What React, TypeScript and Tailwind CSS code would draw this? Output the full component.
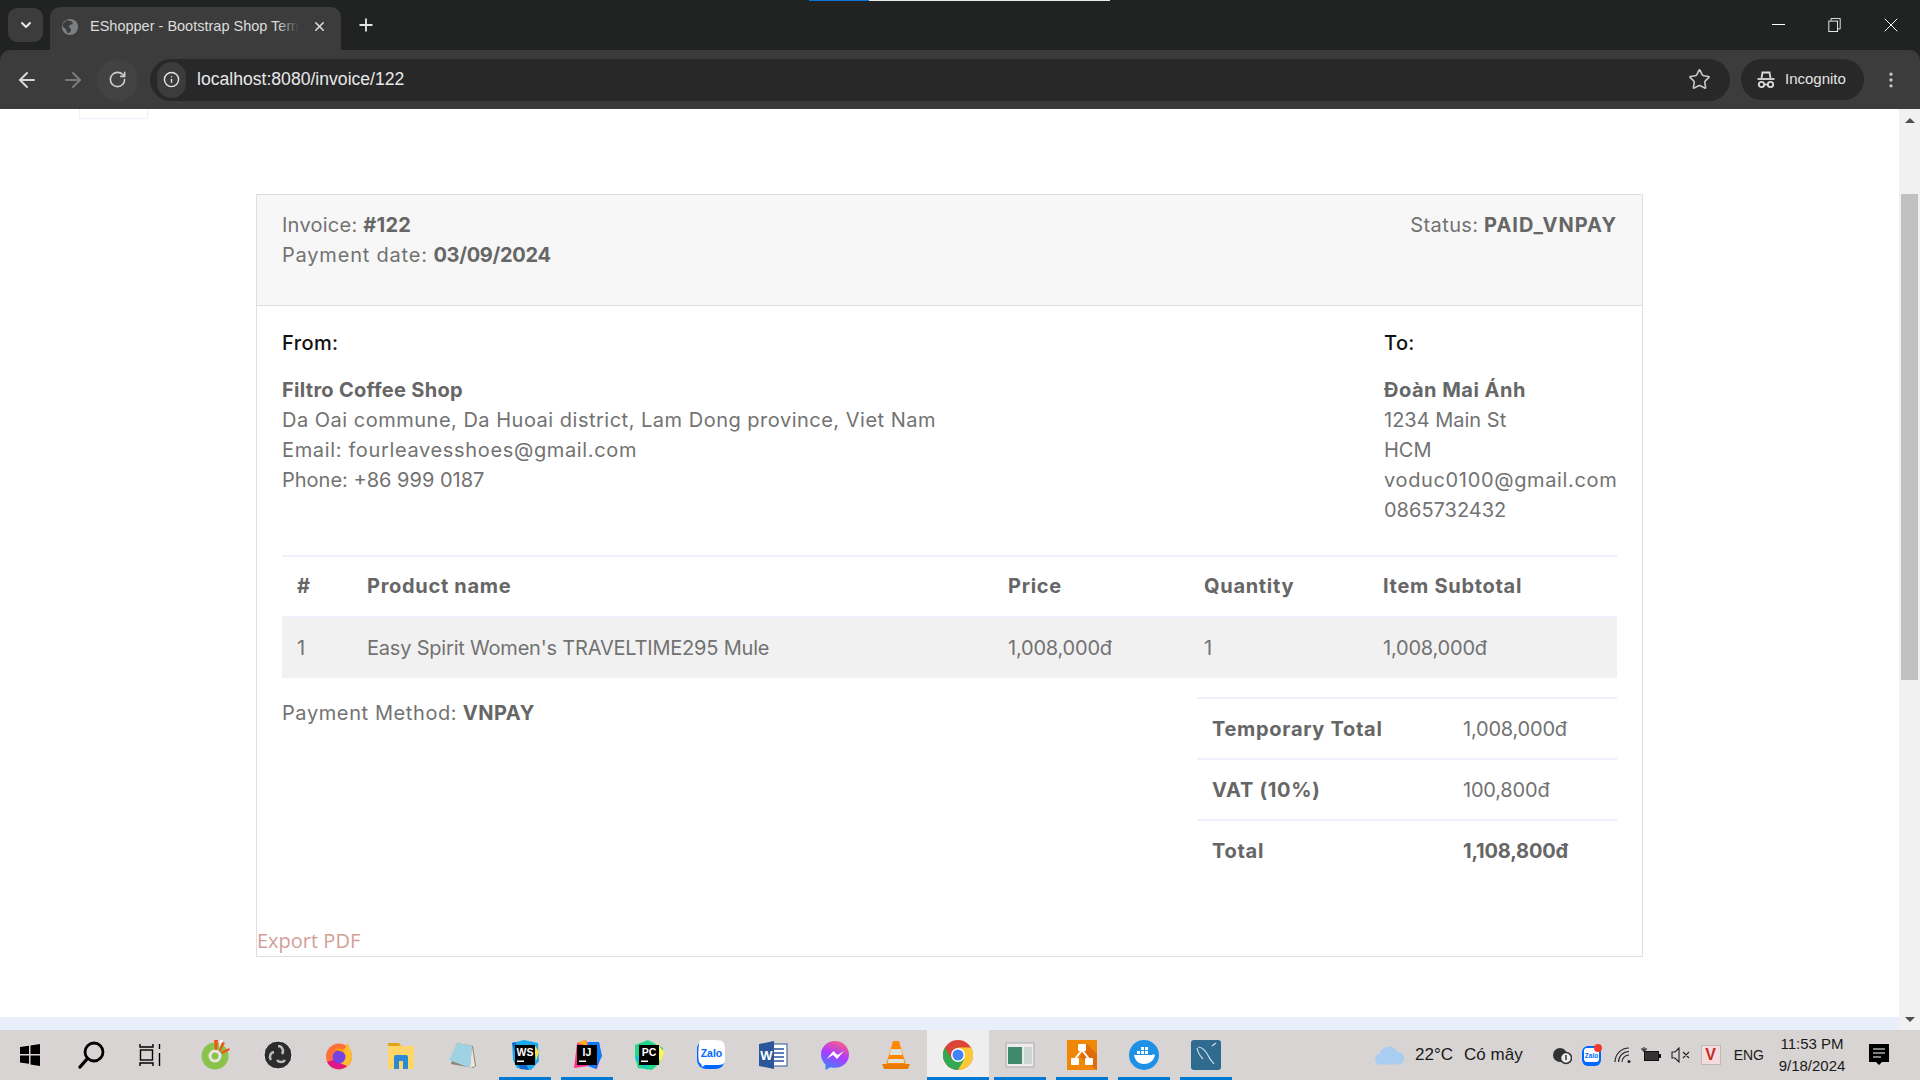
import { ArrowLeft, ArrowRight, ChevronDown, Info, MoreVertical, Plus, RotateCw, Star, X } from 'lucide-react';

const font = 'font-["Inter","Noto_Sans",sans-serif]';
const strong = 'font-bold text-[#666666]';

function Tab() {
  return (
    <div className="relative ml-[7px] mt-[7px] flex h-[43px] w-[291px] items-center rounded-t-[10px] bg-[#3c3c3c] pb-[4px] pl-[11px] pr-[14px]">
      <svg viewBox="0 0 20 20" className="h-[18px] w-[18px] shrink-0">
        <circle cx="10" cy="10" r="9" fill="#7b7e82" />
        <path d="M7 2c2 2 5 1 6 3s-3 2-4 4 3 2 2 5-3 3-4 2-1-4-3-5-3-2-2-4 3-3 5-5z" fill="#3c3c3c" />
      </svg>
      <span className="relative ml-[11px] whitespace-nowrap font-['Liberation_Sans',sans-serif] text-[14.5px] text-[#dcdcdc]">
        EShopper - Bootstrap Shop Tem
        <span className="absolute bottom-0 right-0 top-0 w-[22px] bg-gradient-to-r from-transparent to-[#3c3c3c]" />
      </span>
      <X size={15} strokeWidth={2.5} className="ml-auto shrink-0 text-[#dcdcdc]" />
    </div>
  );
}

function BrowserChrome() {
  return (
    <div className="shrink-0 bg-[#202322]">
      <div className="relative flex h-[50px]">
        <div className="absolute left-[809px] top-0 h-px w-[60px] bg-[#0b74d8]" />
        <div className="absolute left-[869px] top-0 h-px w-[241px] bg-[#e8e8e8]" />
        <div className="mb-[8px] ml-[8px] mt-[8px] flex h-[34px] w-[35px] items-center justify-center rounded-[9px] bg-[#3c3c3c]">
          <ChevronDown size={16} strokeWidth={3} className="text-[#e8e8e8]" />
        </div>
        <Tab />
        <Plus size={20} strokeWidth={2.2} className="ml-[15px] mt-[15px] text-[#e4e4e4]" />
        <div className="ml-auto flex items-start text-white">
          <div className="mt-[24px] h-px w-[13px] bg-white" />
          <svg viewBox="0 0 14 16" fill="none" stroke="currentColor" className="ml-[43px] mt-[18px] h-[14px] w-[13px]">
            <rect x="0.5" y="3.5" width="10" height="12" />
            <path d="M3 3V0.5h10.5v12H11" />
          </svg>
          <X size={24} strokeWidth={1} className="ml-[38px] mr-[17px] mt-[13px]" />
        </div>
      </div>
      <div className="flex h-[59px] items-center rounded-t-[10px] bg-[#3c3c3c]">
        <ArrowLeft size={24} className="ml-[15px] text-[#d6d6d6]" />
        <ArrowRight size={24} className="ml-[22px] text-[#7a7a7a]" />
        <div className="ml-[12px] flex h-[42px] w-[41px] items-center justify-center rounded-full bg-[#424242]">
          <RotateCw size={19} className="text-[#d0d0d0]" />
        </div>
        <div className="ml-[12px] flex h-[42px] w-[1580px] items-center rounded-full bg-[#282828]">
          <div className="ml-[7px] flex h-[36px] w-[29px] items-center justify-center rounded-full bg-[#3c3c3c]">
            <Info size={17} className="text-[#e4e4e4]" />
          </div>
          <span className="ml-[11px] font-['Liberation_Sans',sans-serif] text-[17.6px] text-[#e8e8e8]">localhost:8080/invoice/122</span>
          <Star size={23} strokeWidth={1.7} className="ml-auto mr-[19px] text-[#c8c8c8]" />
        </div>
        <div className="ml-[11px] flex h-[41px] w-[123px] items-center rounded-full bg-[#282828]">
          <svg viewBox="0 0 20 20" fill="none" stroke="#dcdcdc" strokeWidth="1.8" className="ml-[15px] h-[20px] w-[20px]">
            <path d="M5.5 8l1-5.500h7l1 5.500" />
            <path d="M1.500 9h17" />
            <circle cx="5.500" cy="14.500" r="2.700" />
            <circle cx="14.500" cy="14.500" r="2.700" />
            <path d="M8 14.500h4" />
          </svg>
          <span className="ml-[9px] font-['Liberation_Sans',sans-serif] text-[15px] text-[#e4e4e4]">Incognito</span>
        </div>
        <MoreVertical size={20} className="ml-[17px] text-[#c8c8c8]" />
      </div>
    </div>
  );
}

function Invoice() {
  return (
    <div className={`relative mx-[256px] mt-[85px] w-[1387px] border border-[#dfdfdf] ${font} text-[20px] leading-[30px] text-[#727272]`}>
      <div className="flex h-[111px] justify-between border-b border-[#dfdfdf] bg-[#f7f7f7] px-[25px] pt-[15px]">
        <div>
          <div className="tracking-[0.25px]">Invoice: <b className={strong}>#122</b></div>
          <div><span className="tracking-[0.8px]">Payment date:</span> <b className={`${strong} tracking-[-0.3px]`}>03/09/2024</b></div>
        </div>
        <div><span className="tracking-[0.4px]">Status:</span> <b className={`${strong} tracking-[1px]`}>PAID_VNPAY</b></div>
      </div>

      <div className="px-[25px] pt-[22px]">
        <div className="flex justify-between">
          <div>
            <div className="mb-[17px] font-medium tracking-[0.4px] text-[#111111]">From:</div>
            <div className={`${strong} tracking-[0.3px]`}>Filtro Coffee Shop</div>
            <div className="tracking-[0.5px]">Da Oai commune, Da Huoai district, Lam Dong province, Viet Nam</div>
            <div className="tracking-[0.65px]">Email: fourleavesshoes@gmail.com</div>
            <div>Phone: +86 999 0187</div>
          </div>
          <div className="w-[233px]">
            <div className="mb-[17px] font-medium tracking-[0.4px] text-[#111111]">To:</div>
            <div className={`${strong} tracking-[0.5px]`}>Đoàn Mai Ánh</div>
            <div>1234 Main St</div>
            <div>HCM</div>
            <div className="tracking-[0.65px]">voduc0100@gmail.com</div>
            <div>0865732432</div>
          </div>
        </div>

        <div className="mt-[30px] grid grid-cols-[85px_641px_196px_179px_1fr]">
          {['#', 'Product name', 'Price', 'Quantity', 'Item Subtotal'].map((h, i) => (
            <div key={h} className={`flex h-[61px] items-center border-t-2 border-[#eef1fb] pb-px tracking-[0.7px] ${strong} ${i === 0 ? 'pl-[15px]' : ''}`}>
              {h}
            </div>
          ))}
          {['1', "Easy Spirit Women's TRAVELTIME295 Mule", '1,008,000đ', '1', '1,008,000đ'].map((c, i) => (
            <div key={i} className={`flex h-[62px] items-center border-t-2 border-[#eef1fb] bg-[#f1f1f1] tracking-[-0.2px] ${i === 0 ? 'pl-[15px]' : ''}`}>
              {c}
            </div>
          ))}
        </div>

        <div className="flex justify-between">
          <div className="pt-[20px]"><span className="tracking-[0.6px]">Payment Method:</span> <b className={`${strong} tracking-[0.5px]`}>VNPAY</b></div>
          <div className="mt-[19px] w-[420px]">
            {[
              ['Temporary Total', '1,008,000đ', false],
              ['VAT (10%)', '100,800đ', false],
              ['Total', '1,108,800đ', true],
            ].map(([label, value, isTotal]) => (
              <div key={String(label)} className="flex h-[61px] items-center border-t-2 border-[#eef1fb] pl-[15px]">
                <b className={`w-[251px] tracking-[0.7px] ${strong}`}>{label}</b>
                <span className={`tracking-[-0.2px] ${isTotal ? strong : ''}`}>{value}</span>
              </div>
            ))}
          </div>
        </div>
      </div>

      <a className="mt-[46px] block h-[30px] font-['Open_Sans',sans-serif] text-[#d39e98]">Export PDF</a>
    </div>
  );
}

function Scrollbar() {
  return (
    <div className="absolute bottom-0 right-0 top-0 flex w-[21px] flex-col items-center bg-[#f1f1f1]">
      <div className="mt-[9px] h-0 w-0 border-x-[5px] border-b-[5px] border-x-transparent border-b-[#505050]" />
      <div className="mt-[71px] h-[486px] w-[17px] bg-[#c1c1c1]" />
      <div className="mb-[8px] mt-auto h-0 w-0 border-x-[5px] border-t-[5px] border-x-transparent border-t-[#505050]" />
    </div>
  );
}

const Tile = ({ children }: { children: React.ReactNode }) => (
  <svg viewBox="0 0 30 30" className="h-[30px] w-[30px]">
    {children}
  </svg>
);

const jetbrainsText = (label: string) => (
  <>
    <rect x="5" y="5" width="20" height="20" fill="#000" />
    <text x="15" y="16" textAnchor="middle" fontSize="10.500" fontWeight="700" fill="#fff" fontFamily="Liberation Sans">{label}</text>
    <rect x="7" y="20.500" width="7" height="1.500" fill="#fff" />
  </>
);

const appIcons: { key: string; line?: boolean; active?: boolean; shift?: string; svg: React.ReactNode }[] = [
  {
    key: 'windows',
    svg: <Tile><path d="M5 7l9-1.300V14H5zM15.500 5.500L25 4v10h-9.500zM5 15.500h9v8.300l-9-1.300zM15.500 15.500H25V26l-9.500-1.400z" fill="#000" /></Tile>,
  },
  {
    key: 'search',
    svg: <Tile><circle cx="17" cy="12" r="9" fill="none" stroke="#000" strokeWidth="2.800" /><path d="M10.500 18.500L3 27" stroke="#000" strokeWidth="3.400" strokeLinecap="round" /></Tile>,
  },
  {
    key: 'taskview',
    shift: 'pr-[7px]',
    svg: <Tile><path d="M5 4v3h13V4M5 26v-3h13v3M24.500 4v5M24.500 13v13" fill="none" stroke="#000" strokeWidth="1.400" /><rect x="5.500" y="10" width="12" height="10" fill="none" stroke="#000" strokeWidth="1.400" /></Tile>,
  },
  {
    key: 'coccoc',
    svg: <Tile><circle cx="14" cy="16" r="13.500" fill="#8bc34a" /><circle cx="14" cy="16" r="6.500" fill="#e8e6e6" /><circle cx="14" cy="16" r="3.500" fill="#8bc34a" /><path d="M13 0h4l-1 10h-2zM21 2l3 1-5 9-1-1zM28 8l1 2-8 4-1-2z" fill="#f4511e" /><path d="M19 0h3l-4 8z" fill="#fff" /></Tile>,
  },
  {
    key: 'obs',
    svg: <Tile><circle cx="15" cy="15" r="14" fill="#2c2c2c" stroke="#eee" strokeWidth="1" /><path d="M15 6a5 5 0 0 1 4 8M8 20a5 5 0 0 1 3-8M22 20a5 5 0 0 1-8 0" fill="none" stroke="#bbb" strokeWidth="2.500" /></Tile>,
  },
  {
    key: 'firefox',
    svg: <Tile><circle cx="15" cy="16.500" r="13" fill="#ff7139" /><path d="M15 29a13 13 0 0 0 13-12c0-5-2-9-5-15 0 5-2 6-4 8z" fill="#ffbd2e" /><path d="M3 22a13 13 0 0 0 20 4L9 20z" fill="#e31587" /><circle cx="15" cy="17" r="6.500" fill="#7542e5" /><path d="M11 9c4-2 9 0 10 5-3-3-6-3-10-5z" fill="#ff980e" /></Tile>,
  },
  {
    key: 'folder',
    svg: <Tile><path d="M2 3h11l3 3h12v23H2z" fill="#fdd667" /><path d="M2 3h11l2 3H2z" fill="#dfa21a" /><path d="M8 29V17a2 2 0 0 1 2-2h10a2 2 0 0 1 2 2v12h-5v-8h-4v8z" fill="#2a8ad4" /></Tile>,
  },
  {
    key: 'notepad',
    svg: <Tile><path d="M9 3l16 3 3 20-3 2L3 24z" fill="#8d8370" /><path d="M9 3l15 3-2 22L1 20z" fill="#9fd3e4" /><path d="M24 6l3 20-5 2z" fill="#e8e6df" /></Tile>,
  },
  {
    key: 'webstorm',
    line: true,
    svg: <Tile><path d="M2 3l12-3 14 3 1 18-8 9-14-2-4-8z" fill="#19a9ee" /><path d="M2 3l8 26 9 1L5 2z" fill="#0f68c9" /><path d="M24 4l5 8-3 9z" fill="#f1e34c" />{jetbrainsText('WS')}</Tile>,
  },
  {
    key: 'intellij',
    line: true,
    svg: <Tile><path d="M2 28L5 3l8-3 3 3 11-1 2 14-4 13-8-3z" fill="#ff318c" /><path d="M16 2l11 0 3 14-6 13-8-3z" fill="#087cfa" /><path d="M5 3l8-3 3 6z" fill="#fdb60d" />{jetbrainsText('IJ')}</Tile>,
  },
  {
    key: 'pycharm',
    svg: <Tile><path d="M1 5l13-5 15 8-2 14-9 8-14-2-3-10z" fill="#21d789" /><path d="M22 2l8 10-4 12z" fill="#fcf84a" /><path d="M14 30L1 18l8-5z" fill="#07c3f2" />{jetbrainsText('PC')}</Tile>,
  },
  {
    key: 'zalo',
    svg: <Tile><rect x="1" y="0" width="28" height="29" rx="9" fill="#0068ff" /><path d="M4 0h17c6 0 8 3 8 8v14c-1 2-3 3-7 3H9l-3 2c0-2-1-3-3-5-1-5-1-16 1-22z" fill="#fff" /><text x="15.500" y="17" textAnchor="middle" fontSize="10.500" fontWeight="700" fill="#0068ff" fontFamily="Liberation Sans">Zalo</text></Tile>,
  },
  {
    key: 'word',
    svg: <Tile><rect x="9" y="4" width="20" height="22" fill="#fff" stroke="#2b579a" /><path d="M13 9h13M13 13h13M13 17h13M13 21h13" stroke="#2b579a" strokeWidth="1.600" /><path d="M1 4l15-3v28L1 26z" fill="#2b579a" /><text x="8.500" y="20" textAnchor="middle" fontSize="13" fontWeight="700" fill="#fff" fontFamily="Liberation Sans">W</text></Tile>,
  },
  {
    key: 'messenger',
    svg: (
      <Tile>
        <defs>
          <linearGradient id="msg" x1="0.300" y1="1" x2="0.700" y2="0">
            <stop offset="0" stopColor="#3a86ff" />
            <stop offset="0.500" stopColor="#a83cff" />
            <stop offset="1" stopColor="#ff5c87" />
          </linearGradient>
        </defs>
        <path d="M15 1C7 1 1 7 1 14.500c0 4 1.800 7.500 4.500 10V30l5-2.800c1.400.4 3 .6 4.500.6 8 0 14-6 14-13.300S23 1 15 1z" fill="url(#msg)" />
        <path d="M6.500 19l7-8 4 4 6.500-4-7 8-4-4z" fill="#fff" />
      </Tile>
    ),
  },
  {
    key: 'vlc',
    svg: <Tile><path d="M12 1h6l7 24H5z" fill="#ff8800" /><path d="M10 9h10l1.500 6h-13zM7.500 19h15l1 4h-17z" fill="#e0e0e0" /><path d="M1 24h28l-2 5H3z" fill="#e97a00" /></Tile>,
  },
  {
    key: 'chrome',
    active: true,
    svg: <Tile><circle cx="15" cy="15" r="15" fill="#db4437" /><path d="M15 30A15 15 0 0 0 28 7.500H15z" fill="#fcc934" /><path d="M2 7.500A15 15 0 0 0 15 30l6.500-11.300H8.500z" fill="#34a853" /><circle cx="15" cy="15" r="7" fill="#fff" /><circle cx="15" cy="15" r="5.500" fill="#4285f4" /></Tile>,
  },
  {
    key: 'app',
    line: true,
    svg: <Tile><rect x="1" y="3" width="28" height="24" fill="#eceaea" stroke="#aaa" /><rect x="3" y="7" width="14" height="17" fill="#3f8a6e" /><rect x="19" y="7" width="8" height="17" fill="#cdd5d5" /></Tile>,
  },
  {
    key: 'drawio',
    line: true,
    svg: <Tile><rect width="30" height="30" fill="#f08705" /><path d="M13 17L30 30V14L20 4z" fill="#df6c0c" /><path d="M15 10L8 19M15 10l7 9" stroke="#fff" strokeWidth="2" /><rect x="11" y="4" width="8" height="7" rx="1" fill="#fff" /><rect x="4" y="18" width="8" height="7" rx="1" fill="#fff" /><rect x="18" y="18" width="8" height="7" rx="1" fill="#fff" /></Tile>,
  },
  {
    key: 'docker',
    line: true,
    svg: <Tile><circle cx="15" cy="15" r="15" fill="#1d91e6" /><path d="M5 15h18c1-1 2-1 3 0-1 6-6 9-11 9-6 0-9-4-10-9z" fill="#fff" /><path d="M8 11h3v3H8zM12 11h3v3h-3zM16 11h3v3h-3zM12 7h3v3h-3zM16 7h3v3h-3z" fill="#fff" /></Tile>,
  },
  {
    key: 'mysql',
    line: true,
    svg: <Tile><rect width="30" height="30" rx="3" fill="#2f6a8f" /><path d="M7 7c5 0 8 4 11 10 1 3 3 4 5 7M6 8c1 5 3 8 6 11M21 6l4-3" fill="none" stroke="#cfe0ea" strokeWidth="1.200" /></Tile>,
  },
];

function Taskbar() {
  return (
    <div className="flex h-[50px] shrink-0 items-stretch bg-[#d8d4d4]">
      <div className="-ml-[1px] flex">
        {appIcons.map((a) => (
          <div
            key={a.key}
            className={`relative flex w-[61.900px] items-center justify-center ${a.active ? 'bg-[#eeeeee]' : ''} ${a.shift ?? ''}`}
          >
            {a.svg}
            {a.line && <div className="absolute bottom-0 left-[5px] right-[5px] h-[3px] bg-[#0078d4]" />}
            {a.active && <div className="absolute bottom-0 left-0 right-0 h-[3px] bg-[#0078d4]" />}
          </div>
        ))}
      </div>
      <div className="ml-auto flex items-center font-['Liberation_Sans',sans-serif] text-[#1a1a1a]">
        <svg viewBox="0 0 30 20" className="h-[20px] w-[30px]">
          <path d="M6 19.500a5.500 5.500 0 0 1-1-11A9 9 0 0 1 22 7a6.300 6.300 0 0 1 2 12.500z" fill="#a9cdf0" />
        </svg>
        <span className="ml-[10px] text-[17px]">22°C</span>
        <span className="ml-[11px] text-[17px]">Có mây</span>
        <svg viewBox="0 0 20 20" className="ml-[29px] h-[20px] w-[20px]">
          <circle cx="8" cy="10" r="7" fill="#333" />
          <circle cx="14" cy="13" r="5.500" fill="#eee" stroke="#333" strokeWidth="1.500" />
          <path d="M14 10v5" stroke="#333" strokeWidth="1.500" />
        </svg>
        <svg viewBox="0 0 20 22" className="ml-[10px] h-[22px] w-[20px]">
          <rect x="0" y="2" width="19" height="20" rx="6" fill="#0068ff" />
          <rect x="2" y="4" width="15" height="14" rx="3" fill="#fff" />
          <text x="9.500" y="14" textAnchor="middle" fontSize="6.500" fontWeight="700" fill="#0068ff" fontFamily="Liberation Sans">Zalo</text>
          <circle cx="16" cy="4" r="4" fill="#f03a2e" />
        </svg>
        <svg viewBox="0 0 18 18" fill="none" stroke="#222" strokeWidth="1.100" className="ml-[12px] h-[18px] w-[18px]">
          <path d="M1 16A14 14 0 0 1 15 2M4.500 16A10.500 10.500 0 0 1 15 5.500M8 16a7 7 0 0 1 7-7" />
          <circle cx="15" cy="15.500" r="1.500" fill="#222" stroke="none" />
        </svg>
        <svg viewBox="0 0 20 16" className="ml-[9px] h-[16px] w-[20px]">
          <rect x="3.500" y="4.500" width="14" height="9" fill="#333" stroke="#111" />
          <rect x="18" y="7" width="2" height="4" fill="#111" />
          <path d="M3 0v5M1 1v2h4V1" stroke="#111" fill="none" />
        </svg>
        <svg viewBox="0 0 20 16" fill="none" stroke="#222" strokeWidth="1.100" className="ml-[10px] h-[16px] w-[20px]">
          <path d="M1 5h3l4-4v14l-4-4H1zM12 5l6 6M18 5l-6 6" />
        </svg>
        <div className="ml-[10px] flex h-[20px] w-[20px] items-center justify-center border border-[#bbbbbb] bg-[#f4dcdc] text-[16px] font-bold leading-none text-[#c42b2b]">V</div>
        <span className="ml-[13px] text-[14px]">ENG</span>
        <div className="ml-[12px] w-[72px] text-center text-[15px] leading-[22px]">
          <div>11:53 PM</div>
          <div>9/18/2024</div>
        </div>
        <svg viewBox="0 0 20 22" className="ml-[21px] mr-[31px] h-[22px] w-[20px]">
          <path d="M0 0h20v18h-7l-3 3-3-3H0z" fill="#000" />
          <path d="M4 5h12M4 9h12M4 13h8" stroke="#fff" strokeWidth="1.200" />
        </svg>
      </div>
    </div>
  );
}

export default function App() {
  return (
    <div className="flex h-screen flex-col overflow-hidden bg-white">
      <BrowserChrome />
      <div className="relative flex-1 overflow-hidden">
        <div className="absolute left-[79px] top-0 h-[10px] w-[69px] border-x border-b border-[#eef1fb]" />
        <Invoice />
        <div className="absolute bottom-0 left-0 right-0 h-[13px] bg-[#e9eefb]" />
        <Scrollbar />
      </div>
      <Taskbar />
    </div>
  );
}
